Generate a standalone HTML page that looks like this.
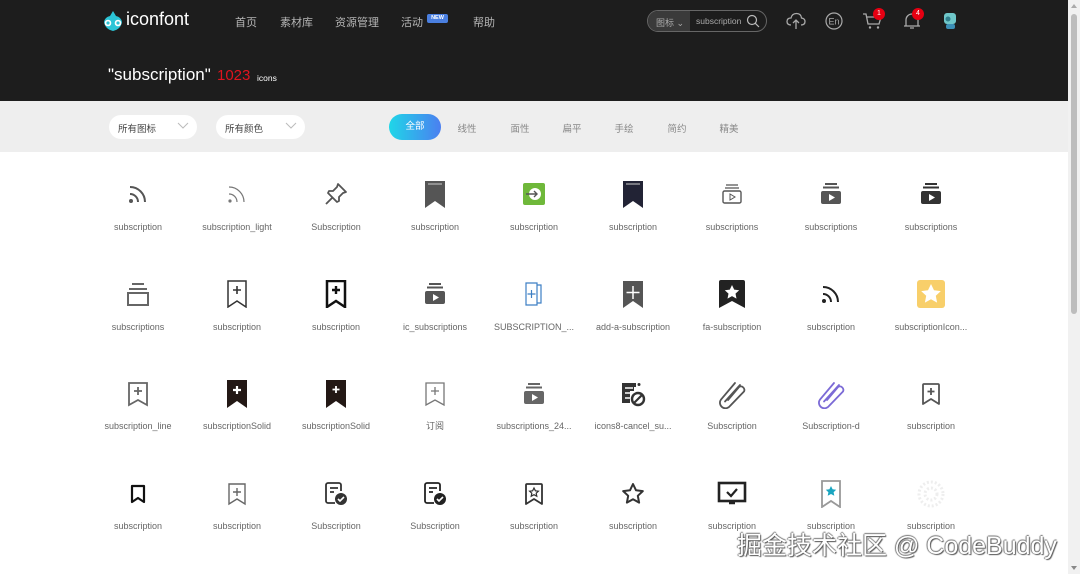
<!DOCTYPE html>
<html><head><meta charset="utf-8">
<style>
*{margin:0;padding:0;box-sizing:border-box}
body{width:1080px;height:574px;overflow:hidden;background:#fff;font-family:"Liberation Sans","Noto Sans CJK SC",sans-serif;position:relative}
.a{position:absolute}
#hd{left:0;top:0;width:1068px;height:101px;background:#1d1d1d}
.nav{color:#b5b5b5;font-size:11px;top:14px}
#fb{left:0;top:101px;width:1068px;height:51px;background:#eee}
.dd{top:115px;height:24px;background:#fff;border-radius:12px;font-size:9.5px;color:#444;padding:6px 0 0 9px}
.dd svg{position:absolute;right:8px;top:7px}
.tab{top:121px;font-size:9.5px;color:#888;transform:translateX(-50%)}
.ic{transform:translate(-50%,-50%)}
.lb{font-size:9px;line-height:11px;height:11px;color:#666;transform:translateX(-50%);white-space:nowrap;top:0}
#sb{left:1068px;top:0;width:12px;height:574px;background:#f1f1f1}
#th{left:1071px;top:14px;width:6px;height:300px;background:#bdbdbd;border-radius:3px}
.bd{width:12px;height:12px;border-radius:6px;background:#e60012;color:#fff;font-size:7px;text-align:center;line-height:12px}
</style></head><body>
<div id="hd" class="a"></div>
<svg class="a" style="left:101px;top:10px" width="24" height="22" viewBox="0 0 24 22"><path d="M12 1 L15 6 Q20 7 21 12 Q20 19 12 21 Q4 19 3 12 Q4 7 9 6Z" fill="#2bc4d6"/><circle cx="7" cy="13" r="3.3" fill="#fff"/><circle cx="17" cy="13" r="3.3" fill="#fff"/><circle cx="7" cy="13" r="1.6" fill="#2bc4d6"/><circle cx="17" cy="13" r="1.6" fill="#2bc4d6"/></svg>
<div class="a" style="left:126px;top:9px;color:#fff;font-size:18px">iconfont</div>
<div class="a nav" style="left:235px">首页</div>
<div class="a nav" style="left:280px">素材库</div>
<div class="a nav" style="left:335px">资源管理</div>
<div class="a nav" style="left:401px">活动</div>
<div class="a" style="left:427px;top:14px;width:21px;height:9px;background:#4a7fe0;border-radius:2px;color:#fff;font-size:5.5px;text-align:center;line-height:9px;font-weight:bold">NEW</div>
<div class="a nav" style="left:473px">帮助</div>
<div class="a" style="left:108px;top:65px;color:#fff;font-size:17px">"subscription"</div>
<div class="a" style="left:217px;top:67px;color:#e0141e;font-size:15px">1023</div>
<div class="a" style="left:257px;top:73px;color:#fff;font-size:8.5px">icons</div>
<div class="a" style="left:647px;top:10px;width:120px;height:22px;border:1px solid #666;border-radius:11px;background:#1d1d1d;overflow:hidden">
<div class="a" style="left:0;top:0;width:42px;height:22px;background:#3a3a3a;color:#aaa;font-size:9px;padding:5px 0 0 8px">图标 ⌄</div>
<div class="a" style="left:48px;top:5px;color:#aaa;font-size:8.5px">subscription</div>
<svg class="a" style="left:98px;top:3px" width="14" height="14" viewBox="0 0 14 14"><circle cx="6" cy="6" r="4.5" fill="none" stroke="#bbb" stroke-width="1.2"/><path d="M9.3 9.3L13 13" stroke="#bbb" stroke-width="1.2"/></svg></div>
<svg class="a" style="left:786px;top:12px" width="20" height="18" viewBox="0 0 20 18"><path d="M5 13 Q1 13 1 9.5 Q1 6 5 6 Q6 1.5 10.5 1.5 Q15 1.5 15.5 6 Q19 6.5 19 9.5 Q19 13 15 13" fill="none" stroke="#aaa" stroke-width="1.3"/><path d="M10 17V8M7 11l3-3 3 3" fill="none" stroke="#aaa" stroke-width="1.3"/></svg>
<svg class="a" style="left:825px;top:12px" width="18" height="18" viewBox="0 0 18 18"><circle cx="9" cy="9" r="8" fill="none" stroke="#aaa" stroke-width="1.2"/><text x="9" y="12.5" font-size="9" fill="#aaa" text-anchor="middle" font-family="Liberation Sans">En</text></svg>
<svg class="a" style="left:862px;top:12px" width="20" height="18" viewBox="0 0 20 18"><path d="M1 2h3l2 10h11l2-7H5" fill="none" stroke="#aaa" stroke-width="1.3"/><circle cx="8" cy="15.5" r="1.2" fill="#aaa"/><circle cx="16" cy="15.5" r="1.2" fill="#aaa"/></svg>
<div class="a bd" style="left:873px;top:8px">1</div>
<svg class="a" style="left:903px;top:12px" width="18" height="18" viewBox="0 0 18 18"><path d="M3 14V8a6 6 0 0112 0v6h2H1z M7 16h4" fill="none" stroke="#aaa" stroke-width="1.3"/></svg>
<div class="a bd" style="left:912px;top:8px">4</div>
<svg class="a" style="left:941px;top:11px" width="18" height="20" viewBox="0 0 18 20"><rect x="3" y="2" width="12" height="11" rx="3" fill="#6fc7c9"/><circle cx="7" cy="8" r="2.5" fill="#2f7e8c"/><rect x="5" y="13" width="9" height="5" rx="2" fill="#3b8fb6"/></svg>
<div id="fb" class="a"></div>
<div class="a dd" style="left:109px;width:88px">所有图标<svg width="12" height="8" viewBox="0 0 12 8"><path d="M1 1l5 5 5-5" fill="none" stroke="#bbb"/></svg></div>
<div class="a dd" style="left:216px;width:89px">所有颜色<svg width="12" height="8" viewBox="0 0 12 8"><path d="M1 1l5 5 5-5" fill="none" stroke="#bbb"/></svg></div>
<div class="a" style="left:389px;top:114px;width:52px;height:26px;border-radius:13px;background:linear-gradient(90deg,#1fd6e8,#4b7ff0);color:#fff;font-size:9.5px;text-align:center;line-height:26px">全部</div>
<div class="a tab" style="left:467px">线性</div>
<div class="a tab" style="left:520px">面性</div>
<div class="a tab" style="left:572px">扁平</div>
<div class="a tab" style="left:624px">手绘</div>
<div class="a tab" style="left:677px">简约</div>
<div class="a tab" style="left:729px">精美</div>

<svg class="a ic" style="left:138px;top:194px" width="24" height="24" viewBox="0 0 24 24"><circle cx="5" cy="19" r="2" fill="#555"/><path d="M4 12a8 8 0 018 8M4 5a15 15 0 0115 15" fill="none" stroke="#555" stroke-width="2"/></svg>
<svg class="a ic" style="left:237px;top:194px" width="24" height="24" viewBox="0 0 24 24"><circle cx="5" cy="19" r="1.6" fill="#777"/><path d="M4 12a8 8 0 018 8M4 5a15 15 0 0115 15" fill="none" stroke="#777" stroke-width="1.2"/></svg>
<svg class="a ic" style="left:336px;top:194px" width="26" height="26" viewBox="0 0 26 26"><path d="M15 3l8 8-3 1-4 4 0 4-2 1-9-9 1-2h4l4-4z M9 17l-6 6" fill="none" stroke="#555" stroke-width="1.8" stroke-linejoin="round"/></svg>
<svg class="a ic" style="left:435px;top:194px" width="24" height="28" viewBox="0 0 24 28"><path d="M2 1h20v27l-10-7-10 7z" fill="#555"/><path d="M5 4h14" stroke="#ccc" stroke-width="1"/></svg>
<svg class="a ic" style="left:534px;top:194px" width="24" height="24" viewBox="0 0 24 24"><rect x="1" y="1" width="22" height="22" rx="2" fill="#6fb83a"/><circle cx="13" cy="12" r="6" fill="#fff"/><path d="M4 12h11M12 9l3 3-3 3" fill="none" stroke="#555" stroke-width="1.4"/></svg>
<svg class="a ic" style="left:633px;top:194px" width="24" height="28" viewBox="0 0 24 28"><path d="M2 1h20v27l-10-7-10 7z" fill="#222335"/><path d="M5 4h14" stroke="#ccc" stroke-width="1"/></svg>
<svg class="a ic" style="left:732px;top:194px" width="24" height="24" viewBox="0 0 24 24"><path d="M6 3h12M5 6h14" stroke="#555" stroke-width="1.2"/><rect x="3" y="9" width="18" height="12" rx="1.5" fill="none" stroke="#555" stroke-width="1.4"/><path d="M10 12v6l5-3z" fill="none" stroke="#555"/></svg>
<svg class="a ic" style="left:831px;top:194px" width="24" height="24" viewBox="0 0 24 24"><path d="M6 2h12M4 5.5h16" stroke="#555" stroke-width="2"/><rect x="2" y="9" width="20" height="13" rx="2" fill="#555"/><path d="M10 12v7l6-3.5z" fill="#fff"/></svg>
<svg class="a ic" style="left:931px;top:194px" width="24" height="24" viewBox="0 0 24 24"><path d="M6 2h12M4 5.5h16" stroke="#333" stroke-width="2"/><rect x="2" y="9" width="20" height="13" rx="2" fill="#333"/><path d="M10 12v7l6-3.5z" fill="#fff"/></svg>

<svg class="a ic" style="left:138px;top:294px" width="26" height="26" viewBox="0 0 26 26"><path d="M7 3h12M4 8h18" stroke="#666" stroke-width="2"/><rect x="3" y="12" width="20" height="12" fill="none" stroke="#666" stroke-width="2"/></svg>
<svg class="a ic" style="left:237px;top:294px" width="24" height="28" viewBox="0 0 24 28"><path d="M3 1h18v26l-9-6-9 6z" fill="none" stroke="#333" stroke-width="1.5"/><path d="M12 6v8M8 10h8" stroke="#333" stroke-width="1.6"/></svg>
<svg class="a ic" style="left:336px;top:294px" width="24" height="28" viewBox="0 0 24 28"><path d="M3 1h18v26l-9-6-9 6z" fill="none" stroke="#111" stroke-width="2.5"/><path d="M12 6v8M8 10h8" stroke="#111" stroke-width="2.4"/></svg>
<svg class="a ic" style="left:435px;top:294px" width="24" height="24" viewBox="0 0 24 24"><path d="M6 2h12M4 5.5h16" stroke="#555" stroke-width="2"/><rect x="2" y="9" width="20" height="13" rx="2" fill="#555"/><path d="M10 12v7l6-3.5z" fill="#fff"/></svg>
<svg class="a ic" style="left:534px;top:294px" width="24" height="26" viewBox="0 0 24 26"><path d="M4 2h11v22H4z M15 4h4v18h-4" fill="none" stroke="#3d7fc4" stroke-width="1.2"/><path d="M9.5 9v8M5.5 13h8" stroke="#3d7fc4" stroke-width="1.2"/></svg>
<svg class="a ic" style="left:633px;top:294px" width="24" height="28" viewBox="0 0 24 28"><path d="M2 1h20v27l-10-7-10 7z" fill="#555"/><path d="M12 6v13M5.5 12.5h13" stroke="#fff" stroke-width="1.5"/></svg>
<svg class="a ic" style="left:732px;top:294px" width="28" height="28" viewBox="0 0 28 28"><path d="M1 2a2 2 0 012-2h22a2 2 0 012 2v26l-13-7-13 7z" fill="#222"/><path d="M14 5l2.2 4.6 5 .6-3.7 3.4 1 5-4.5-2.5-4.5 2.5 1-5-3.7-3.4 5-.6z" fill="#fff"/></svg>
<svg class="a ic" style="left:831px;top:294px" width="24" height="24" viewBox="0 0 24 24"><circle cx="5" cy="19" r="2" fill="#222"/><path d="M4 12a8 8 0 018 8M4 5a15 15 0 0115 15" fill="none" stroke="#222" stroke-width="2"/></svg>
<svg class="a ic" style="left:931px;top:294px" width="28" height="28" viewBox="0 0 28 28"><rect x="0" y="0" width="28" height="28" rx="3" fill="#f8cf6a"/><path d="M14 4l3 6.3 6.8.8-5 4.7 1.3 6.8-6.1-3.4-6.1 3.4 1.3-6.8-5-4.7 6.8-.8z" fill="#fff"/></svg>

<svg class="a ic" style="left:138px;top:394px" width="24" height="26" viewBox="0 0 24 26"><path d="M3 2h18v22l-9-5-9 5z" fill="none" stroke="#666" stroke-width="1.8"/><path d="M12 6v8M8 10h8" stroke="#666" stroke-width="1.8"/></svg>
<svg class="a ic" style="left:237px;top:394px" width="22" height="28" viewBox="0 0 22 28"><path d="M1 0h20v28l-10-7-10 7z" fill="#231815"/><path d="M11 6v8M7 10h8" stroke="#fff" stroke-width="2.2"/></svg>
<svg class="a ic" style="left:336px;top:394px" width="22" height="28" viewBox="0 0 22 28"><path d="M1 0h20v28l-10-7-10 7z" fill="#231815"/><path d="M11 6v7M7.5 9.5h7" stroke="#fff" stroke-width="1.8"/></svg>
<svg class="a ic" style="left:435px;top:394px" width="24" height="26" viewBox="0 0 24 26"><path d="M3 2h18v22l-9-5-9 5z" fill="none" stroke="#777" stroke-width="1.3"/><path d="M12 6v8M8 10h8" stroke="#777" stroke-width="1.3"/></svg>
<svg class="a ic" style="left:534px;top:394px" width="24" height="24" viewBox="0 0 24 24"><path d="M6 2h12M4 5.5h16" stroke="#666" stroke-width="2"/><rect x="2" y="9" width="20" height="13" rx="2" fill="#666"/><path d="M10 12v7l6-3.5z" fill="#fff"/></svg>
<svg class="a ic" style="left:633px;top:394px" width="26" height="26" viewBox="0 0 26 26"><path d="M2 2h14v4h-2v4h-4v12H2z" fill="#333"/><path d="M5 7h8M5 12h5M5 17h5" stroke="#fff" stroke-width="1.6"/><circle cx="18" cy="18" r="6" fill="none" stroke="#333" stroke-width="2.4"/><path d="M14 22l8-8" stroke="#333" stroke-width="2.2"/><circle cx="19" cy="3.5" r="1.5" fill="#333"/></svg>
<svg class="a ic" style="left:732px;top:394px" width="30" height="30" viewBox="0 0 30 30"><path d="M11 21L22 8a3.5 3.5 0 015 4.5L13 27a5.5 5.5 0 01-9-6.5L18 4" fill="none" stroke="#555" stroke-width="1.8" stroke-linecap="round"/><path d="M8 22.5L23 6" stroke="#555" stroke-width="1.8" stroke-linecap="round"/></svg>
<svg class="a ic" style="left:831px;top:394px" width="30" height="30" viewBox="0 0 30 30"><path d="M11 21L22 8a3.5 3.5 0 015 4.5L13 27a5.5 5.5 0 01-9-6.5L18 4" fill="none" stroke="#7b6ad6" stroke-width="1.8" stroke-linecap="round"/><path d="M8 22.5L23 6" stroke="#7b6ad6" stroke-width="1.8" stroke-linecap="round"/></svg>
<svg class="a ic" style="left:931px;top:394px" width="22" height="24" viewBox="0 0 22 24"><path d="M3 3a1 1 0 011-1h14a1 1 0 011 1v19l-8-5-8 5z" fill="none" stroke="#555" stroke-width="1.8" stroke-linejoin="round"/><path d="M11 6v7M7.5 9.5h7" stroke="#555" stroke-width="1.8"/></svg>

<svg class="a ic" style="left:138px;top:494px" width="18" height="20" viewBox="0 0 18 20"><path d="M3 2h12v16l-6-4-6 4z" fill="none" stroke="#111" stroke-width="2.2" stroke-linejoin="round"/></svg>
<svg class="a ic" style="left:237px;top:494px" width="22" height="24" viewBox="0 0 22 24"><path d="M3 2h16v20l-8-5-8 5z" fill="none" stroke="#666" stroke-width="1.4"/><path d="M11 6v8M7 10h8" stroke="#666" stroke-width="1.4"/></svg>
<svg class="a ic" style="left:336px;top:494px" width="26" height="26" viewBox="0 0 26 26"><path d="M12 22H5a2 2 0 01-2-2V4a2 2 0 012-2h11a2 2 0 012 2v6" fill="none" stroke="#333" stroke-width="1.8"/><path d="M7 7h8M7 11h4" stroke="#333" stroke-width="1.8"/><circle cx="18" cy="18" r="6" fill="#333"/><path d="M15 18l2 2 4-4" fill="none" stroke="#fff" stroke-width="1.6"/></svg>
<svg class="a ic" style="left:435px;top:494px" width="26" height="26" viewBox="0 0 26 26"><path d="M12 22H5a2 2 0 01-2-2V4a2 2 0 012-2h11a2 2 0 012 2v6" fill="none" stroke="#222" stroke-width="1.8"/><path d="M7 7h8M7 11h4" stroke="#222" stroke-width="1.8"/><circle cx="18" cy="18" r="6" fill="#222"/><path d="M15 18l2 2 4-4" fill="none" stroke="#fff" stroke-width="1.6"/></svg>
<svg class="a ic" style="left:534px;top:494px" width="22" height="24" viewBox="0 0 22 24"><path d="M3 3a1 1 0 011-1h14a1 1 0 011 1v19l-8-5-8 5z" fill="none" stroke="#333" stroke-width="1.8" stroke-linejoin="round"/><path d="M11 6l1.4 2.8 3 .4-2.2 2 .6 3-2.8-1.5-2.8 1.5.6-3-2.2-2 3-.4z" fill="none" stroke="#333" stroke-width="1.2"/></svg>
<svg class="a ic" style="left:633px;top:494px" width="24" height="24" viewBox="0 0 24 24"><path d="M12 2l3 6.3 6.8.8-5 4.7 1.3 6.8-6.1-3.4-6.1 3.4 1.3-6.8-5-4.7 6.8-.8z" fill="none" stroke="#333" stroke-width="2" stroke-linejoin="round"/></svg>
<svg class="a ic" style="left:732px;top:494px" width="30" height="26" viewBox="0 0 30 26"><rect x="2" y="2" width="26" height="18" fill="none" stroke="#222" stroke-width="2.6"/><path d="M10 11l4 4 6-7" fill="none" stroke="#222" stroke-width="2.2"/><path d="M12 22h6" stroke="#222" stroke-width="2.5"/></svg>
<svg class="a ic" style="left:831px;top:494px" width="22" height="28" viewBox="0 0 22 28"><path d="M2 1h18v26l-9-6-9 6z" fill="none" stroke="#999" stroke-width="1.8"/><path d="M11 6l1.6 3.3 3.6.5-2.6 2.4.7 3.6-3.3-1.8-3.3 1.8.7-3.6-2.6-2.4 3.6-.5z" fill="#1aa5c0"/></svg>
<svg class="a ic" style="left:931px;top:494px" width="28" height="28" viewBox="0 0 28 28"><circle cx="14" cy="14" r="12" fill="none" stroke="#eee" stroke-width="3" stroke-dasharray="2 2"/><circle cx="14" cy="14" r="6" fill="none" stroke="#eee" stroke-width="3" stroke-dasharray="2 2"/></svg>

<div class="a lb" style="left:138px;top:222px">subscription</div>
<div class="a lb" style="left:237px;top:222px">subscription_light</div>
<div class="a lb" style="left:336px;top:222px">Subscription</div>
<div class="a lb" style="left:435px;top:222px">subscription</div>
<div class="a lb" style="left:534px;top:222px">subscription</div>
<div class="a lb" style="left:633px;top:222px">subscription</div>
<div class="a lb" style="left:732px;top:222px">subscriptions</div>
<div class="a lb" style="left:831px;top:222px">subscriptions</div>
<div class="a lb" style="left:931px;top:222px">subscriptions</div>

<div class="a lb" style="left:138px;top:322px">subscriptions</div>
<div class="a lb" style="left:237px;top:322px">subscription</div>
<div class="a lb" style="left:336px;top:322px">subscription</div>
<div class="a lb" style="left:435px;top:322px">ic_subscriptions</div>
<div class="a lb" style="left:534px;top:322px">SUBSCRIPTION_...</div>
<div class="a lb" style="left:633px;top:322px">add-a-subscription</div>
<div class="a lb" style="left:732px;top:322px">fa-subscription</div>
<div class="a lb" style="left:831px;top:322px">subscription</div>
<div class="a lb" style="left:931px;top:322px">subscriptionIcon...</div>

<div class="a lb" style="left:138px;top:421px">subscription_line</div>
<div class="a lb" style="left:237px;top:421px">subscriptionSolid</div>
<div class="a lb" style="left:336px;top:421px">subscriptionSolid</div>
<div class="a lb" style="left:435px;top:421px">订阅</div>
<div class="a lb" style="left:534px;top:421px">subscriptions_24...</div>
<div class="a lb" style="left:633px;top:421px">icons8-cancel_su...</div>
<div class="a lb" style="left:732px;top:421px">Subscription</div>
<div class="a lb" style="left:831px;top:421px">Subscription-d</div>
<div class="a lb" style="left:931px;top:421px">subscription</div>

<div class="a lb" style="left:138px;top:521px">subscription</div>
<div class="a lb" style="left:237px;top:521px">subscription</div>
<div class="a lb" style="left:336px;top:521px">Subscription</div>
<div class="a lb" style="left:435px;top:521px">Subscription</div>
<div class="a lb" style="left:534px;top:521px">subscription</div>
<div class="a lb" style="left:633px;top:521px">subscription</div>
<div class="a lb" style="left:732px;top:521px">subscription</div>
<div class="a lb" style="left:831px;top:521px">subscription</div>
<div class="a lb" style="left:931px;top:521px">subscription</div>

<div class="a" style="left:737px;top:526px;font-size:25px;color:#fff;text-shadow:1px 1px 1px #555,-1px 0 1px #777,0 -1px 1px #777;white-space:nowrap;font-family:'Liberation Sans','Noto Sans CJK SC',sans-serif">掘金技术社区 @ CodeBuddy</div>

<div id="sb" class="a"></div>
<div class="a" style="left:1071px;top:4px;width:0;height:0;border-left:3px solid transparent;border-right:3px solid transparent;border-bottom:4px solid #aaa"></div>
<div id="th" class="a"></div>
<div class="a" style="left:1071px;top:566px;width:0;height:0;border-left:3px solid transparent;border-right:3px solid transparent;border-top:4px solid #888"></div>
</body></html>
